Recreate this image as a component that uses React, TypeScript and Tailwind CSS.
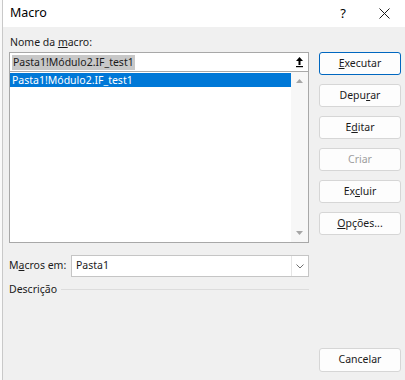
import React from "react";

const font = { fontFamily: '"Noto Sans", "Open Sans", sans-serif' };

function Btn({ children, primary, disabled, className = "" }: { children: React.ReactNode; primary?: boolean; disabled?: boolean; className?: string }) {
  return (
    <div
      className={`h-[23px] w-[82px] rounded-[3px] flex items-center justify-center text-[10.5px] ${
        primary ? "border border-[#0067c0] bg-[#fdfdfd]" : "border border-[#d6d6d6] bg-[#fdfdfd]"
      } ${disabled ? "text-[#9d9d9d]" : "text-[#1b1b1b]"} ${className}`}
    >
      {children}
    </div>
  );
}

export default function App() {
  return (
    <div className="w-[405px] h-[380px] bg-[#f0f0f0] flex flex-col text-[#1b1b1b] relative" style={font}>
      <div className="absolute left-0 top-0 w-[3px] h-full bg-[#fafafa] border-r border-[#c9c9c9]" />
      <div className="h-[27px] bg-white flex items-center shrink-0">
        <span className="ml-[10px] text-[12.5px] text-black">Macro</span>
        <span className="ml-auto text-[13px] text-black mr-[33px]">?</span>
        <svg width="11" height="11" viewBox="0 0 11 11" className="mr-[15px]">
          <path d="M0.5 0.5 L10.5 10.5 M10.5 0.5 L0.5 10.5" stroke="#1b1b1b" strokeWidth="1" />
        </svg>
      </div>
      <div className="flex flex-1">
        <div className="w-[300px] ml-[9px] flex flex-col pt-[7px]">
          <div className="h-[16px] text-[10.5px] leading-[16px] mb-[2px] ml-[1px]">
            Nome da <u>m</u>acro:
          </div>
          <div className="h-[20px] border border-[#a8a8a8] bg-white flex items-center">
            <span className="ml-[2px] bg-[#c8c8c8] text-[10.5px] leading-[15px] px-[1px]">Pasta1!Módulo2.IF_test1</span>
            <div className="ml-auto w-[18px] h-full flex items-center justify-center">
              <svg width="9" height="12" viewBox="0 0 9 12">
                <path d="M4.5 1 L8 5 L5.5 5 L5.5 9 L3.5 9 L3.5 5 L1 5 Z" fill="#000" />
                <rect x="1" y="10" width="7" height="1.2" fill="#000" />
              </svg>
            </div>
          </div>
          <div className="h-[171px] border border-[#a8a8a8] border-t-0 bg-white flex">
            <div className="flex-1 pt-[1px]">
              <div className="h-[14px] bg-[#0078d7] text-white text-[10.5px] leading-[14px] pl-[2px]">
                Pasta1!Módulo2.IF_test1
              </div>
            </div>
            <div className="w-[17px] bg-[#f7f7f7] flex flex-col items-center justify-between py-[7px]">
              <svg width="7" height="4" viewBox="0 0 7 4">
                <path d="M0 4 L3.5 0 L7 4 Z" fill="#a6a6a6" />
              </svg>
              <svg width="7" height="4" viewBox="0 0 7 4">
                <path d="M0 0 L3.5 4 L7 0 Z" fill="#a6a6a6" />
              </svg>
            </div>
          </div>
          <div className="flex items-center mt-[12px] h-[22px]">
            <span className="w-[62px] text-[10.5px]">
              M<u>a</u>cros em:
            </span>
            <div className="flex-1 h-[22px] border border-[#c5c5c5] bg-white flex items-center">
              <span className="ml-[4px] text-[10.5px]">Pasta1</span>
              <div className="ml-auto w-[17px] h-full border-l border-[#e5e5e5] flex items-center justify-center">
                <svg width="8" height="5" viewBox="0 0 8 5">
                  <path d="M0.5 0.5 L4 4 L7.5 0.5" stroke="#707070" fill="none" strokeWidth="1" />
                </svg>
              </div>
            </div>
          </div>
          <div className="flex items-center mt-[5px] h-[16px]">
            <span className="text-[10.5px]">Descrição</span>
            <div className="flex-1 h-px bg-[#dcdcdc] ml-[4px] mt-[-2px]" />
          </div>
        </div>
        <div className="ml-[10px] w-[82px] flex flex-col pt-[25px] pb-[8px]">
          <div className="flex flex-col gap-[9px]">
            <Btn primary>
              <span><u>E</u>xecutar</span>
            </Btn>
            <Btn>
              <span>Depu<u>r</u>ar</span>
            </Btn>
            <Btn>
              <span>E<u>d</u>itar</span>
            </Btn>
            <Btn disabled>
              <span>Criar</span>
            </Btn>
            <Btn>
              <span>Ex<u>c</u>luir</span>
            </Btn>
            <Btn>
              <span><u>O</u>pções...</span>
            </Btn>
          </div>
          <Btn className="mt-auto h-[24px]">
            <span>Cancelar</span>
          </Btn>
        </div>
      </div>
    </div>
  );
}
